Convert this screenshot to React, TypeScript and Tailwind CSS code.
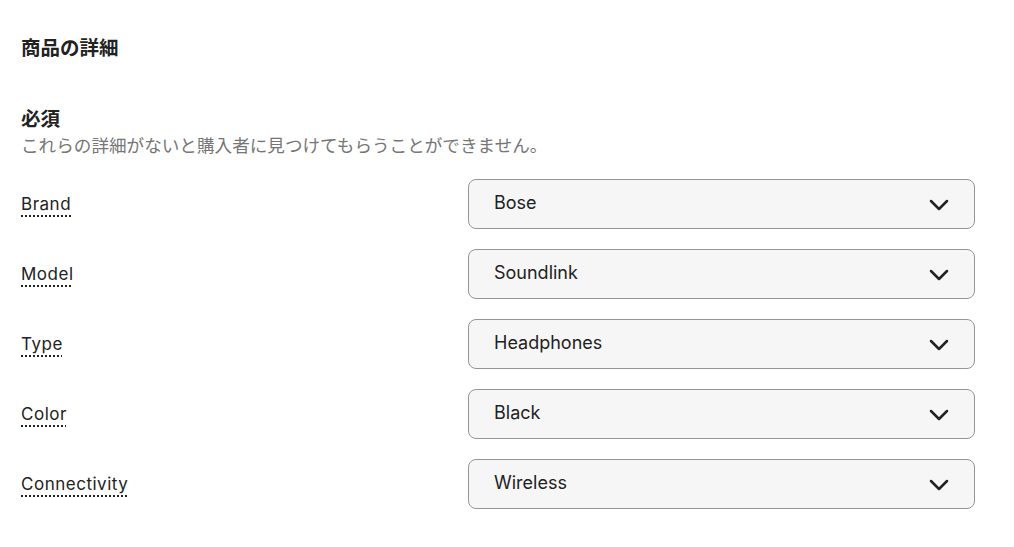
import { ChevronDown } from "lucide-react";

const fields = [
  { label: "Brand", value: "Bose" },
  { label: "Model", value: "Soundlink" },
  { label: "Type", value: "Headphones" },
  { label: "Color", value: "Black" },
  { label: "Connectivity", value: "Wireless" },
];

export default function App() {
  return (
    <div
      className="bg-white w-screen min-h-screen pl-[21px] pr-[39px] pt-[36px] text-[#222222]"
      style={{ fontFamily: "Inter, 'Noto Sans CJK JP', sans-serif" }}
    >
      <h1 className="font-bold text-[19.5px] leading-[24px]">商品の詳細</h1>
      <h2 className="font-bold text-[19.5px] leading-[24px] mt-[47px]">必須</h2>
      <p className="text-[17.6px] leading-[24px] text-[#767676] mt-[3px]">
        これらの詳細がないと購入者に見つけてもらうことができません。
      </p>
      <div className="flex flex-col gap-[20px] mt-[21px]">
        {fields.map((f) => (
          <div key={f.label} className="flex items-center justify-between">
            <span className="text-[17px] leading-[20px] tracking-[0.03em] underline decoration-dotted decoration-2 underline-offset-[5px] decoration-[#222222]">
              {f.label}
            </span>
            <button className="w-[507px] h-[50px] rounded-[8px] border border-[#959595] bg-[#f6f6f6] flex items-center justify-between pl-[25px] pr-[19px] text-[18px] text-[#222222]">
              <span className="mt-[-3px]">{f.value}</span>
              <ChevronDown size={32} strokeWidth={1.9} className="mt-[1px]" />
            </button>
          </div>
        ))}
      </div>
    </div>
  );
}
